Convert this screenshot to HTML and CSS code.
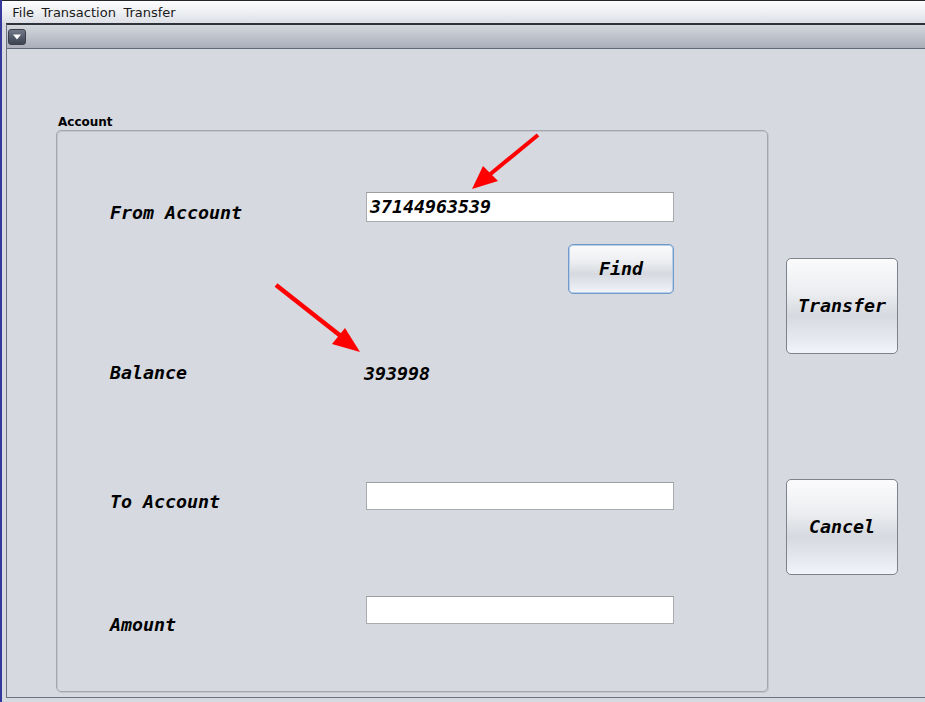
FILE: index.html
```html
<!DOCTYPE html>
<html>
<head>
<meta charset="utf-8">
<link rel="stylesheet" href="styles.css">
</head>
<body>
<div class="screen">
  <div class="edge"></div>
  <div class="main">
    <div class="menubar">
      <span class="menu">File</span>
      <span class="menu">Transaction</span>
      <span class="menu">Transfer</span>
    </div>
    <div class="desk">
      <div class="frame">
        <div class="titlebar">
          <div class="sysbtn">
            <svg width="10" height="8" viewBox="0 0 10 8"><polygon points="1,1.5 9,1.5 5,6.5" fill="#ffffff"/></svg>
          </div>
        </div>
        <div class="content">
          <div class="group">
            <div class="group-title">Account</div>
            <div class="group-box">
              <div class="row row-from">
                <div class="label lbl-from">From Account</div>
                <div class="field field-tall">37144963539</div>
              </div>
              <div class="row row-find">
                <div></div>
                <button class="btn btn-find">Find</button>
              </div>
              <div class="row row-balance">
                <div class="label">Balance</div>
                <div class="value">393998</div>
              </div>
              <div class="row row-to">
                <div class="label lbl-to">To Account</div>
                <div class="field"></div>
              </div>
              <div class="row row-amount">
                <div class="label lbl-amount">Amount</div>
                <div class="field"></div>
              </div>
            </div>
          </div>
          <div class="actions">
            <button class="btn btn-big btn-transfer">Transfer</button>
            <button class="btn btn-big btn-cancel">Cancel</button>
          </div>
        </div>
      </div>
    </div>
  </div>
</div>
<svg class="annotations" width="925" height="702" viewBox="0 0 925 702">
  <line x1="538" y1="135" x2="488" y2="176" stroke="#ff0000" stroke-width="4"/>
  <polygon points="472,189 483,166 498,181" fill="#ff0000"/>
  <line x1="276" y1="285" x2="342" y2="337" stroke="#ff0000" stroke-width="4.5"/>
  <polygon points="360,352 345,328 332,344" fill="#ff0000"/>
</svg>
</body>
</html>
```
FILE: styles.css
```css
html, body {
  margin: 0;
  padding: 0;
}
body {
  width: 925px;
  height: 702px;
  overflow: hidden;
  background: #d6d9df;
  font-family: "DejaVu Sans", sans-serif;
  position: relative;
}
.screen {
  display: flex;
  height: 702px;
}
.edge {
  width: 2px;
  background: #34379b;
  flex: none;
}
.main {
  flex: 1;
  display: flex;
  flex-direction: column;
  min-width: 0;
}
.menubar {
  height: 22px;
  border-top: 1px solid #23262c;
  background: linear-gradient(to bottom, #fdfdfe 0%, #eef0f3 50%, #dcdfe5 100%);
  display: flex;
  align-items: center;
  padding-left: 6.5px;
  font-size: 13px;
  color: #1a1a1a;
  flex: none;
}
.menu {
  padding: 0 3.75px;
}
.desk {
  flex: 1;
  display: flex;
  padding-left: 4px;
  padding-bottom: 4px;
  background: #d6d9df;
}
.frame {
  flex: 1;
  display: flex;
  flex-direction: column;
  border-left: 1px solid #6b7180;
  border-top: 2px solid #2f3238;
  border-bottom: 1px solid #6b7180;
  box-shadow: inset 0 1px 0 #8a8f99;
}
.titlebar {
  height: 23px;
  background: linear-gradient(to bottom, #d4d7dd 0%, #bfc3cb 50%, #a9aeb9 100%);
  border-bottom: 1px solid #646b78;
  display: flex;
  align-items: center;
  padding-left: 1px;
  flex: none;
}
.sysbtn {
  width: 18px;
  height: 16px;
  box-sizing: border-box;
  border-radius: 3px;
  background: linear-gradient(to bottom, #737a89 0%, #545b6a 50%, #3f4553 100%);
  border: 1px solid #3a3f4a;
  display: flex;
  align-items: center;
  justify-content: center;
  margin-top: 1px;
}
.content {
  flex: 1;
  display: flex;
  align-items: flex-start;
  gap: 18px;
  padding-left: 49px;
  padding-top: 66px;
}
.group-title {
  font-size: 12px;
  font-weight: bold;
  line-height: 15px;
  padding-left: 2px;
  color: #000;
}
.group-box {
  width: 712px;
  height: 562px;
  box-sizing: border-box;
  border: 1px solid #a2a6ae;
  border-radius: 5px;
  box-shadow: inset 1px 1px 0 #c4c7cd, 1px 1px 0 #c2c5cb;
  padding-left: 53px;
  padding-top: 61px;
}
.row {
  display: grid;
  grid-template-columns: 256px 308px;
  align-items: start;
}
.label,
.value,
.field,
.btn {
  font-family: "DejaVu Sans Mono", monospace;
  font-weight: bold;
  font-style: italic;
  font-size: 18.3px;
  color: #000;
}
.label,
.value {
  line-height: 21px;
}
.lbl-from { padding-top: 10px; }
.lbl-to { padding-top: 9px; }
.lbl-amount { padding-top: 18px; }
.value { margin-left: -2px; margin-top: 1px; }
.field {
  height: 28px;
  box-sizing: border-box;
  background: #ffffff;
  border: 1px solid #a9abaf;
  border-top-color: #9c9ea2;
  padding-left: 3px;
  line-height: 26px;
}
.field-tall {
  height: 30px;
  line-height: 28px;
}
.row-from { height: 30px; }
.row-find { margin-top: 22px; height: 50px; }
.row-balance { margin-top: 68px; height: 21px; }
.row-to { margin-top: 99px; height: 28px; }
.row-amount { margin-top: 86px; height: 28px; }
.btn {
  box-sizing: border-box;
  border: 1px solid #7e828b;
  border-radius: 5px;
  background: linear-gradient(to bottom, #fbfbfc 0%, #eceef1 35%, #d6d9df 60%, #e6e9f0 85%, #f2f4fa 100%);
  padding: 0 0 2px 0;
  margin: 0;
  cursor: default;
}
.btn-find {
  justify-self: end;
  width: 106px;
  height: 50px;
  border-color: #6e9acd;
  box-shadow: inset 0 0 0 1px #b9cde6;
}
.actions {
  display: flex;
  flex-direction: column;
}
.btn-big {
  width: 112px;
  height: 96px;
}
.btn-transfer { margin-top: 143px; }
.btn-cancel { margin-top: 125px; }
.annotations {
  position: absolute;
  left: 0;
  top: 0;
  pointer-events: none;
}
```
